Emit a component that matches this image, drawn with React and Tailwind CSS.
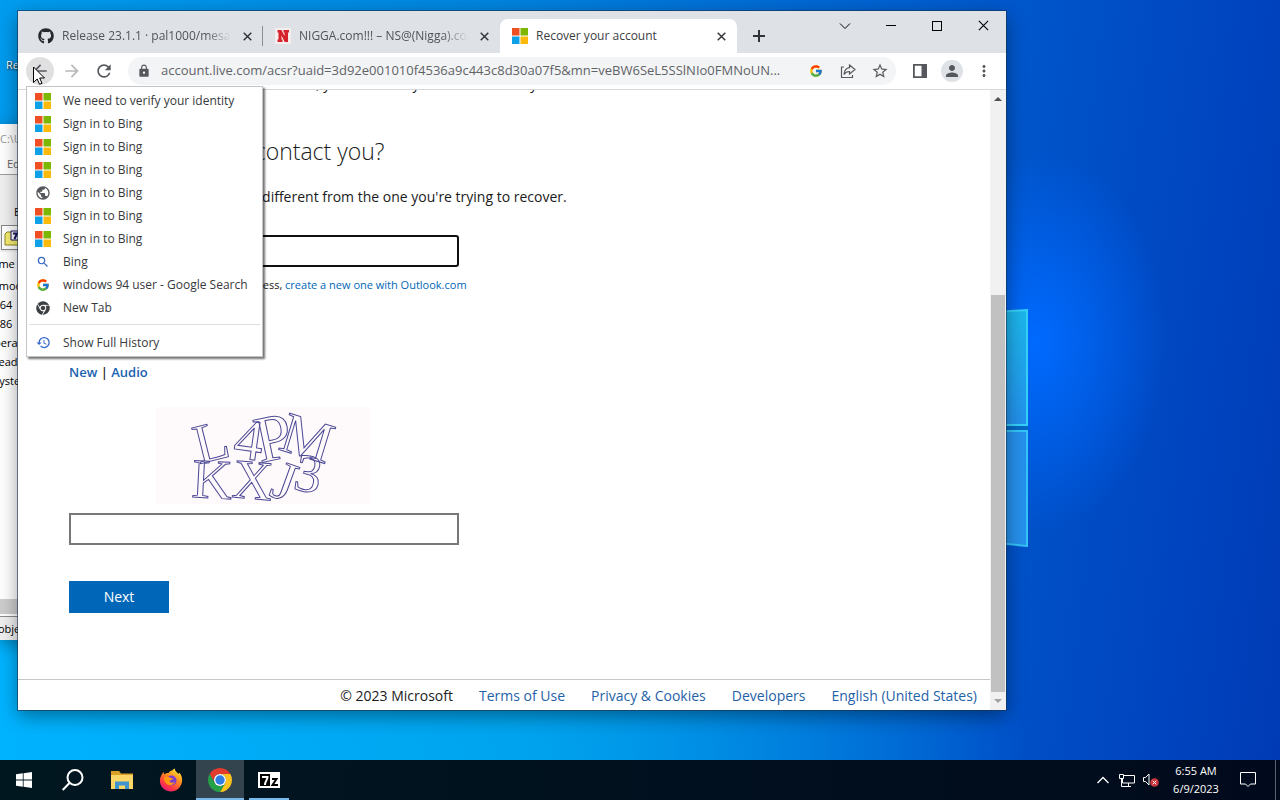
import { useState } from "react";

import { FaChrome, FaGithub } from "react-icons/fa";

import { FcGoogle } from "react-icons/fc";

import {
    MdArrowBack,
    MdArrowForward,
    MdHistory,
    MdLock,
    MdMoreVert,
    MdPerson,
    MdPublic,
    MdRefresh,
    MdSearch,
    MdStarBorder,
} from "react-icons/md";

const historyItems = [
    { icon: "ms", title: "We need to verify your identity" },
    { icon: "ms", title: "Sign in to Bing" },
    { icon: "ms", title: "Sign in to Bing" },
    { icon: "ms", title: "Sign in to Bing" },
    { icon: "globe", title: "Sign in to Bing" },
    { icon: "ms", title: "Sign in to Bing" },
    { icon: "ms", title: "Sign in to Bing" },
    { icon: "search", title: "Bing" },
    { icon: "google", title: "windows 94 user - Google Search" },
    { icon: "chrome", title: "New Tab" },
];

const tabs = [
    { icon: "github", title: "Release 23.1.1 · pal1000/mesa-dist-win" },
    { icon: "n", title: "NIGGA.com!!! – NS@(Nigga).com" },
    { icon: "ms", title: "Recover your account", active: true },
];

const files = ["_mod", "x64", "x86", "perappdeploy", "readme.txt", "systemwide"];

const footerLinks = [
    "Terms of Use",
    "Privacy & Cookies",
    "Developers",
    "English (United States)",
];

// letters of the challenge image: x, y, rotation, size
const captcha = [
    ["L", 43, 57, -14, 56],
    ["4", 76, 50, 8, 58],
    ["P", 104, 56, -12, 66],
    ["M", 121, 42, 17, 58],
    ["K", 35, 90, 3, 56],
    ["X", 75, 90, 5, 56],
    ["J", 112, 88, 20, 56],
    ["3", 136, 82, 10, 54],
];

function MicrosoftLogo() {
    return (
        <svg viewBox="0 0 16 16" className="size-4">
            <path fill="#f04e23" d="M0 0h7.5v7.5H0z" />
            <path fill="#7db700" d="M8.5 0H16v7.5H8.5z" />
            <path fill="#0ea1e8" d="M0 8.5h7.5V16H0z" />
            <path fill="#fbb909" d="M8.5 8.5H16V16H8.5z" />
        </svg>
    );
}

function SiteIcon({ name }) {
    if (name === "ms") return <MicrosoftLogo />;
    if (name === "globe") return <MdPublic className="size-4 text-[#55585c]" />;
    if (name === "search") return <MdSearch className="size-[14px] text-[#3367c8]" />;
    if (name === "google") return <FcGoogle className="size-[14px]" />;
    if (name === "chrome") return <FaChrome className="size-[14px] text-[#3c4043]" />;
    if (name === "github") return <FaGithub className="size-4 text-[#24292e]" />;

    return (
        <svg viewBox="0 0 16 16" className="size-4">
            <path fill="#f6eeee" d="M0 0h16v16H0z" />
            <path
                fill="#d8222b"
                d="M2.5 2h4l3 6V4.500h-1V2H14v2.500h-1V14H9.700L6.500 7.500v4h1V14H2.500v-2.500h1v-7h-1z"
            />
        </svg>
    );
}

function Cross({ className }) {
    return (
        <svg viewBox="0 0 10 10" className={className} fill="none" stroke="currentColor">
            <path d="M.8.8l8.400 8.400M9.200.8L.8 9.200" />
        </svg>
    );
}

function ArchiveWindow() {
    return (
        <section
            aria-label="7-Zip"
            className="absolute left-0 top-[124px] bottom-[120px] flex w-[320px] flex-col overflow-hidden bg-white text-[11px] text-black shadow-[0_4px_16px_rgba(0,0,0,0.35)]"
        >
            <header className="h-[31px] pt-[6px] leading-[18px] text-[#999]">C:\Users</header>

            <nav className="h-5 border-b border-[#a0a0a0] pl-[7px] leading-[18px] text-[#666]">
                Edit
            </nav>

            <div className="h-[77px] bg-[#f0f0f0]">
                <p className="h-[50px] pt-7 pl-[14px] leading-[18px]">Extract</p>
                <div className="ml-px flex h-[25px] w-full items-center border border-[#888] bg-white pl-[2px]">
                    <svg viewBox="0 0 20 16" className="h-4 w-5">
                        <path fill="#f7ec70" stroke="#8b8622" d="M1 4l2-2h5l2 2h8v11H1z" />
                        <path fill="#fff" stroke="#16165c" d="M7 1h12v9H7z" />
                        <path stroke="#16165c" strokeWidth="2" fill="none" d="M9 3.500h4L10.500 9" />
                    </svg>
                </div>
            </div>

            <div className="-ml-2 flex-1 leading-[19px]">
                <p className="-ml-2 pt-[2px]">Name</p>
                <ul className="pt-[3px] pl-[2px]">
                    {files.map((file) => (
                        <li key={file}>{file}</li>
                    ))}
                </ul>
            </div>

            <div className="h-[15px] bg-[#cdcdcd]" />

            <footer className="mt-[2px] h-6 border-t border-[#8c8c8c] bg-[#f0f0f0] leading-6">
                <span className="-ml-[2px]">objects</span>
            </footer>
        </section>
    );
}

function TabStrip() {
    return (
        <header className="flex h-[42px] shrink-0 justify-between bg-[#dee1e6] pl-2">
            <div className="flex items-end">
                {tabs.map((tab) => (
                    <div
                        key={tab.title}
                        className={
                            tab.active
                                ? "relative flex h-[34px] w-[237px] items-center gap-2 rounded-t-lg bg-white pr-2 pl-3"
                                : "relative flex h-[34px] w-[237px] items-center gap-2 pr-2 pl-3"
                        }
                    >
                        <SiteIcon name={tab.icon} />
                        <span
                            className={
                                tab.active
                                    ? "min-w-0 flex-1 overflow-hidden text-[12px] whitespace-nowrap text-[#3c4043]"
                                    : "min-w-0 flex-1 overflow-hidden mask-r-from-85% text-[12px] whitespace-nowrap text-[#505459]"
                            }
                        >
                            {tab.title}
                        </span>
                        <button
                            type="button"
                            aria-label="Close tab"
                            className="flex size-4 items-center justify-center text-[#303236]"
                        >
                            <Cross className="size-[9px] stroke-[1.600]" />
                        </button>
                        {tab.icon === "github" && (
                            <span className="absolute right-0 h-5 w-px bg-[#8b8f94]" />
                        )}
                    </div>
                ))}

                <button
                    type="button"
                    aria-label="New tab"
                    className="flex h-[34px] w-11 items-center justify-center text-[#303236]"
                >
                    <svg viewBox="0 0 12 12" className="size-3" stroke="currentColor" strokeWidth="2">
                        <path d="M6 0v12M0 6h12" />
                    </svg>
                </button>
            </div>

            <div className="flex h-[29px] text-black">
                <button type="button" aria-label="Search tabs" className="flex w-[46px] items-center justify-center">
                    <svg viewBox="0 0 12 12" className="size-3" fill="none" stroke="currentColor">
                        <path d="M1 3.500l5 5 5-5" />
                    </svg>
                </button>
                <button type="button" aria-label="Minimize" className="flex w-[46px] items-center justify-center">
                    <span className="h-px w-[10px] bg-black" />
                </button>
                <button type="button" aria-label="Maximize" className="flex w-[46px] items-center justify-center">
                    <span className="size-[10px] border border-black" />
                </button>
                <button type="button" aria-label="Close" className="flex w-[46px] items-center justify-center">
                    <Cross className="size-[11px]" />
                </button>
            </div>
        </header>
    );
}

function Toolbar() {
    return (
        <div className="flex h-[37px] shrink-0 items-center border-b border-[#d5d7da] bg-white pr-[6px] pl-2 text-[#55585c]">
            <button
                type="button"
                aria-label="Back"
                className="flex size-7 items-center justify-center rounded-full bg-[#e0e0e1]"
            >
                <MdArrowBack className="size-5" />
            </button>
            <button
                type="button"
                aria-label="Forward"
                className="ml-[2px] flex w-8 items-center justify-center text-[#b6b8ba]"
            >
                <MdArrowForward className="size-5" />
            </button>
            <button type="button" aria-label="Reload" className="ml-[2px] flex w-7 items-center justify-center">
                <MdRefresh className="size-5" />
            </button>

            <div className="ml-[10px] flex h-7 min-w-0 flex-1 items-center rounded-full bg-[#f3f4f5] pl-[9px]">
                <MdLock className="size-[14px] shrink-0" />
                <input
                    aria-label="Address"
                    readOnly
                    value="account.live.com/acsr?uaid=3d92e001010f4536a9c443c8d30a07f5&mn=veBW6SeL5SSlNIo0FMNoUN..."
                    className="ml-[10px] min-w-0 flex-1 text-[13px] text-[#5f6368] outline-none"
                />
                <button type="button" aria-label="Search with Google" className="flex w-8 justify-center">
                    <FcGoogle className="size-[14px]" />
                </button>
                <button type="button" aria-label="Share" className="flex w-8 justify-center">
                    <svg viewBox="0 0 16 16" className="size-4" fill="none" stroke="currentColor" strokeWidth="1.200">
                        <path d="M4 4H1.500v10.500h11V12" />
                        <path d="M9.500 2l5.500 4.500L9.500 11V8.500c-2.500 0-4.300 1-5.500 3C4.300 7.700 6.300 5 9.500 4.600z" />
                    </svg>
                </button>
                <button type="button" aria-label="Bookmark" className="flex w-8 justify-center">
                    <MdStarBorder className="size-[18px]" />
                </button>
            </div>

            <button type="button" aria-label="Side panel" className="ml-2 flex w-8 justify-center">
                <svg viewBox="0 0 14 14" className="size-[14px]">
                    <path fill="none" stroke="currentColor" strokeWidth="1.800" d="M.9.9h12.200v12.200H.9z" />
                    <path fill="currentColor" d="M8.500 1H13v12H8.500z" />
                </svg>
            </button>
            <button type="button" aria-label="Profile" className="flex w-8 justify-center">
                <span className="flex size-[22px] items-center justify-center rounded-full bg-[#dee1e6]">
                    <MdPerson className="size-[18px]" />
                </span>
            </button>
            <button type="button" aria-label="Menu" className="flex w-8 justify-center">
                <MdMoreVert className="size-[18px]" />
            </button>
        </div>
    );
}

function RecoverPage() {
    const [email, setEmail] = useState("");

    const [answer, setAnswer] = useState("");

    return (
        <div className="flex min-h-0 flex-1 bg-white">
            <main className="flex min-w-0 flex-1 flex-col overflow-hidden text-[14px] leading-5 text-[#1b1b1b]">
                <form className="flex-1 pl-[51px]" onSubmit={(e) => e.preventDefault()}>
                    <p className="-mt-4 whitespace-nowrap">
                        If the account is stuck or blocked here, you can have your number and your name.
                    </p>

                    <h1 className="mt-[43px] text-[23px] leading-7 font-light">Where should we contact you?</h1>

                    <p className="mt-[22px] whitespace-nowrap">
                        <label htmlFor="email">
                            Enter an email address that's different from the one you're trying to recover.
                        </label>
                    </p>

                    <input
                        id="email"
                        type="email"
                        value={email}
                        onChange={(e) => setEmail(e.target.value)}
                        className="mt-7 block h-8 w-[390px] rounded-[3px] border-2 border-[#101010] px-2 outline-none"
                    />

                    <p className="mt-[10px] text-[11px] leading-4">
                        If you do not have another email address,{" "}
                        <a href="#outlook" className="text-[#0067b8]">
                            create a new one with Outlook.com
                        </a>
                    </p>

                    <p className="mt-[69px] text-[13px] font-semibold">
                        <a href="#new" className="text-[#1a62b0]">New</a>
                        {" | "}
                        <a href="#audio" className="text-[#1a62b0]">Audio</a>
                    </p>

                    <svg viewBox="0 0 214 97" className="mt-[25px] ml-[87px] h-[97px] w-[214px]">
                        <path fill="#fef9fa" d="M0 0h214v97H0z" />
                        <g
                            fill="none"
                            stroke="#4a4794"
                            fontFamily="Liberation Serif, serif"
                        >
                            {captcha.map(([letter, x, y, turn, size]) => (
                                <text key={letter} fontSize={size} transform={`translate(${x} ${y}) rotate(${turn})`}>
                                    {letter}
                                </text>
                            ))}
                        </g>
                    </svg>

                    <input
                        aria-label="Enter the characters you see"
                        value={answer}
                        onChange={(e) => setAnswer(e.target.value)}
                        className="mt-[9px] block h-8 w-[390px] border-2 border-[#777] px-2 outline-none"
                    />

                    <button type="submit" className="mt-9 block h-8 w-[100px] bg-[#0067b8] text-white">
                        Next
                    </button>
                </form>

                <footer className="flex h-[31px] items-center justify-end gap-[26px] border-t border-[#c8c8c8] pt-px pr-[13px] whitespace-nowrap">
                    <span>© 2023 Microsoft</span>
                    {footerLinks.map((link) => (
                        <a key={link} href="#footer" className="text-[#1f62a8]">
                            {link}
                        </a>
                    ))}
                </footer>
            </main>

            <div className="flex w-4 flex-col items-center bg-[#f1f1f1] px-px">
                <svg viewBox="0 0 8 4" className="mt-[7px] h-1 w-2">
                    <path fill="#505050" d="M4 0l4 4H0z" />
                </svg>
                <div className="mt-[194px] w-full flex-1 bg-[#c1c1c1]" />
                <svg viewBox="0 0 8 4" className="my-[7px] h-1 w-2">
                    <path fill="#a3a3a3" d="M0 0h8L4 4z" />
                </svg>
            </div>
        </div>
    );
}

function HistoryMenu() {
    return (
        <div
            role="menu"
            className="absolute top-[75px] left-2 w-[237px] border border-[#c4c4c4] bg-white py-[2px] text-[12px] text-[#37393c] shadow-[2px_2px_2px_rgba(0,0,0,0.55)]"
        >
            {historyItems.map((item, index) => (
                <button
                    key={index}
                    type="button"
                    role="menuitem"
                    className="flex h-[23px] w-full items-center gap-3 pt-px pl-2 text-left whitespace-nowrap"
                >
                    <span className="flex size-4 items-center justify-center">
                        <SiteIcon name={item.icon} />
                    </span>
                    {item.title}
                </button>
            ))}

            <div className="mx-[2px] mt-[5px] mb-[6px] h-px bg-[#dcdde0]" />

            <button
                type="button"
                role="menuitem"
                className="flex h-[23px] w-full items-center gap-3 pl-2 text-left"
            >
                <span className="flex size-4 items-center justify-center">
                    <MdHistory className="size-[15px] text-[#3367c8]" />
                </span>
                Show Full History
            </button>
        </div>
    );
}

function FirefoxIcon() {
    return (
        <svg viewBox="0 0 24 24" className="size-6">
            <defs>
                <linearGradient id="fox" x1="0.8" y1="0" x2="0.2" y2="1">
                    <stop offset="0" stopColor="#ffe838" />
                    <stop offset="0.400" stopColor="#ff8a1f" />
                    <stop offset="0.750" stopColor="#ff3647" />
                    <stop offset="1" stopColor="#e31587" />
                </linearGradient>
            </defs>
            <path
                fill="url(#fox)"
                d="M3 6l1.500-2 1 2.500C7 5 8 4.800 9.500 5c1-1.700 2.500-2.500 3.500-2.500C14 1.500 15 .8 15.800.5c0 2.500 2.200 3.500 3.700 5.500l.8-1.500c2.500 3 3.200 6 2.700 9.500C22 19.500 17.500 23.500 12 23.500S1.500 19.500 1 14C.7 11 1.500 8.500 3 6z"
            />
            <circle cx="12.500" cy="12.500" r="5" fill="#7b3fd0" />
            <path fill="#ff980e" d="M5 10c2-2 4-1.500 6-.5 1 .8 2.500.5 3 1-.5 1.500-3 1.500-3.500 2.500.5 1.800 3 2.500 5.500 1-1.500 3-5 4-7.500 2.500S5 13 5 10z" />
        </svg>
    );
}

function ChromeIcon() {
    return (
        <svg viewBox="0 0 24 24" className="size-6">
            <path fill="#e33b2e" d="M1.610 6a12 12 0 0 1 20.780 0H12a6 6 0 0 0-5.200 9z" />
            <path fill="#fcc31e" d="M22.390 6A12 12 0 0 1 12 24l5.200-9A6 6 0 0 0 12 6z" />
            <path fill="#24a148" d="M12 24A12 12 0 0 1 1.610 6l5.190 9a6 6 0 0 0 10.400 0z" />
            <circle cx="12" cy="12" r="6" fill="#fff" />
            <circle cx="12" cy="12" r="4.700" fill="#2f7de1" />
        </svg>
    );
}

function Taskbar() {
    return (
        <footer className="flex h-10 shrink-0 justify-between bg-linear-to-r from-[#011720] to-[#010a1c] text-white">
            <div className="flex gap-px">
                <button type="button" aria-label="Start" className="flex w-12 items-center justify-center">
                    <svg viewBox="0 0 16 16" className="size-4" fill="currentColor">
                        <path d="M0 2.300l6.800-1v6.300H0zM7.600 1.200L16 0v7.600H7.600zM0 8.400h6.800v6.300L0 13.700zM7.600 8.400H16V16l-8.400-1.200z" />
                    </svg>
                </button>
                <button type="button" aria-label="Search" className="flex w-12 items-center justify-center">
                    <svg viewBox="0 0 22 22" className="size-[22px]" fill="none" stroke="currentColor" strokeWidth="2">
                        <circle cx="13" cy="8.500" r="7.500" />
                        <path d="M7.500 14L.7 21" />
                    </svg>
                </button>
                <button type="button" aria-label="File Explorer" className="flex w-12 items-center justify-center">
                    <svg viewBox="0 0 22 20" className="h-5 w-[22px]">
                        <path fill="#d9a027" d="M0 1h8l2 2.500h12V8H0z" />
                        <path fill="#fbd566" d="M0 5h22v14H0z" />
                        <path fill="#3f93cf" d="M4 11.500h14V19h-4v-3.500H8V19H4z" />
                    </svg>
                </button>
                <button type="button" aria-label="Firefox" className="flex w-12 items-center justify-center">
                    <FirefoxIcon />
                </button>
                <button
                    type="button"
                    aria-label="Chrome"
                    className="flex w-12 items-center justify-center border-b-2 border-[#76b9ed] bg-[#34444e] pt-[2px]"
                >
                    <ChromeIcon />
                </button>
                <button type="button" aria-label="7-Zip" className="flex w-12 justify-center">
                    <span className="flex h-full w-10 items-center justify-center border-b-2 border-[#76b9ed] pt-[2px]">
                        <svg viewBox="0 0 22 16" className="h-4 w-[22px]">
                            <path fill="#fff" d="M0 0h22v16H0z" />
                            <path fill="#000" d="M2 2h10v12H2z" />
                            <path fill="none" stroke="#fff" strokeWidth="2" d="M4 5h5.500c0 3-2.500 4-2.500 8" />
                            <path fill="none" stroke="#000" strokeWidth="2" d="M14 7h4.500L14.500 13H20" />
                        </svg>
                    </span>
                </button>
            </div>

            <div className="flex items-center">
                <button type="button" aria-label="Show hidden icons" className="flex w-6 justify-center">
                    <svg viewBox="0 0 12 8" className="h-2 w-3" fill="none" stroke="currentColor" strokeWidth="1.300">
                        <path d="M.5 7L6 1.500 11.500 7" />
                    </svg>
                </button>
                <button type="button" aria-label="Network" className="flex w-6 justify-center">
                    <svg viewBox="0 0 16 14" className="h-[14px] w-4" fill="none" stroke="currentColor">
                        <path d="M5 2.500h10.500v7.500H3.500V6M.5 1.500h4v4h-4zM2.500 5.500v8H12M9.500 10v3.500" />
                    </svg>
                </button>
                <button type="button" aria-label="Volume" className="flex w-6 justify-center">
                    <svg viewBox="0 0 16 14" className="h-[14px] w-4" fill="none" stroke="currentColor">
                        <path d="M.5 4.500h2L6 1v11L2.500 8.500h-2z" />
                        <circle cx="11.500" cy="9.500" r="4.300" fill="#c8353b" stroke="none" />
                        <path d="M9.700 7.700l3.600 3.600M13.300 7.700l-3.600 3.600" />
                    </svg>
                </button>
                <time className="w-[66px] text-center text-[11px] leading-[18px]">
                    6:55 AM
                    <br />
                    6/9/2023
                </time>
                <button type="button" aria-label="Notifications" className="flex w-[38px] justify-center">
                    <svg viewBox="0 0 16 16" className="size-4" fill="none" stroke="currentColor">
                        <path d="M.5.5h15v11.500H10.500L8 14.500 5.500 12H.5z" />
                    </svg>
                </button>
                <span className="ml-2 h-full w-[5px] border-l border-[#5c6470]" />
            </div>
        </footer>
    );
}

export default function App() {
    return (
        <div className="flex h-screen w-full flex-col overflow-hidden font-['Open_Sans','Noto_Sans',sans-serif]">
            <div className="relative min-h-0 flex-1 bg-[radial-gradient(ellipse_130px_190px_at_81%_45%,#006aff_0%,#006aff00_100%),linear-gradient(97deg,#009cef_0%,#0085df_35%,#0064d2_62%,#0050c8_80%,#0043be_92%,#003bb5_100%)]">
                <div className="absolute inset-x-0 bottom-0 h-[120px] bg-linear-to-r from-[#00b3ff] via-[#00a4ee] via-40% to-transparent to-80%" />

                <span className="absolute top-[57px] left-[6px] text-[11px] text-white [text-shadow:1px_1px_2px_#000]">
                    Recycle Bin
                </span>

                {/* lit panes of the wallpaper's window */}
                <svg viewBox="0 0 60 240" className="absolute top-[308px] right-[252px] h-[240px] w-[60px]">
                    <defs>
                        <linearGradient id="pane" x1="0" y1="0" x2="0" y2="1">
                            <stop offset="0" stopColor="#1cb6ea" />
                            <stop offset="1" stopColor="#2390ec" />
                        </linearGradient>
                    </defs>
                    <path fill="#0668c4" d="M0 116h60v8H0z" />
                    <path fill="url(#pane)" stroke="#35d0f8" strokeWidth="2" d="M-2 6L59 2v115H-2z" />
                    <path fill="#2590ec" stroke="#35c4f8" strokeWidth="2" d="M-2 123h61v115l-61-6z" />
                </svg>

                <ArchiveWindow />

                <section
                    aria-label="Browser"
                    className="absolute top-[11px] right-[274px] bottom-[50px] left-[18px] flex flex-col shadow-[0_0_0_1px_rgba(20,50,80,0.6),0_6px_18px_rgba(0,0,0,0.4)]"
                >
                    <TabStrip />
                    <Toolbar />
                    <RecoverPage />
                    <HistoryMenu />

                    <svg viewBox="0 0 12 19" className="absolute top-[55px] left-[15px] h-[19px] w-3">
                        <path
                            fill="#fff"
                            stroke="#000"
                            d="M.5 1v15.500l3.700-3.500 2.300 5.300 2.500-1-2.300-5.300h4.800z"
                        />
                    </svg>
                </section>
            </div>

            <Taskbar />
        </div>
    );
}
